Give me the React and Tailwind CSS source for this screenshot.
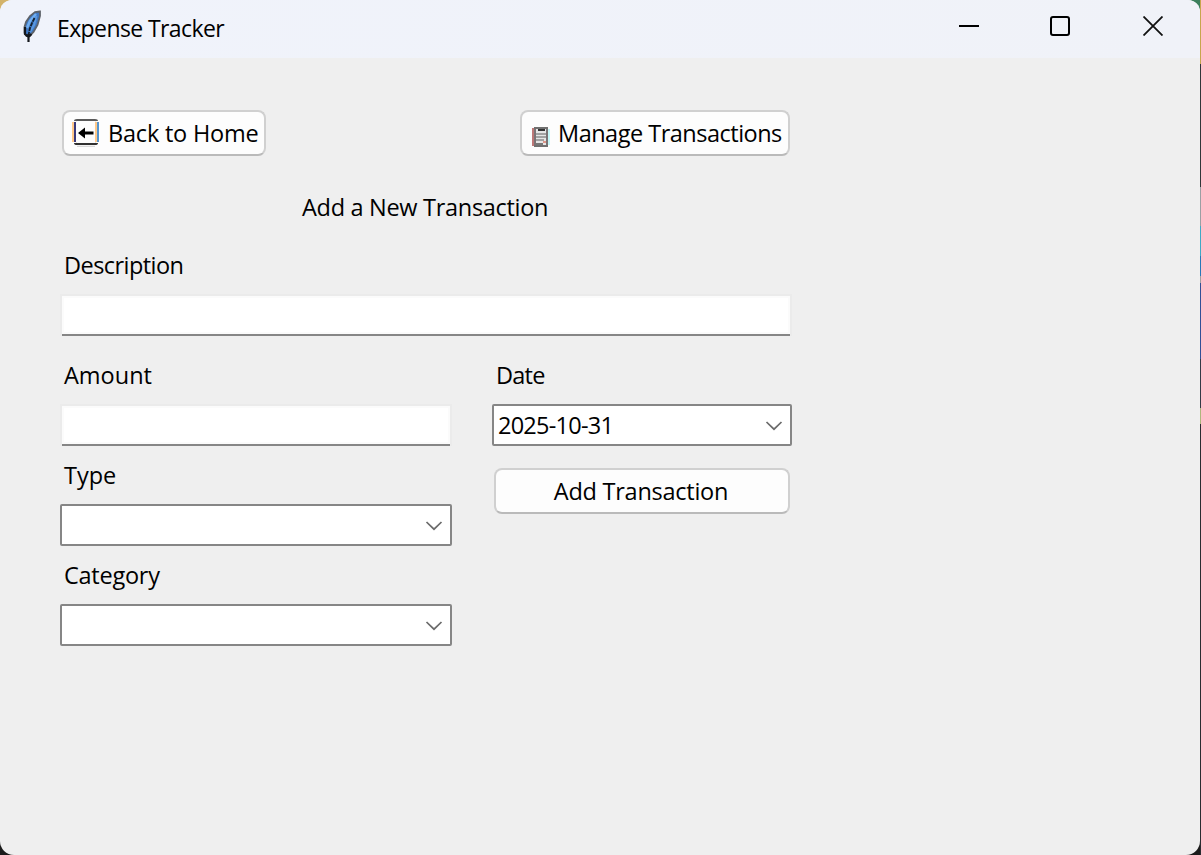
const TEXT = "block whitespace-nowrap leading-8 text-black";

function Label({ children, className = "" }) {
  return <span className={`${TEXT} text-[23.5px] ${className}`}>{children}</span>;
}

function Button({ children, className = "" }) {
  return (
    <button
      className={`flex h-[46px] items-center rounded-[8px] border-2 border-[#d0d0d0] border-b-[#bababa] bg-[#fdfdfd] ${className}`}
    >
      {children}
    </button>
  );
}

function Entry({ className = "" }) {
  return (
    <div className={`flex h-[42px] flex-col bg-[#ebebeb] px-[2px] pt-[2px] ${className}`}>
      <input className="h-[38px] w-full border-2 border-[#fbfbfb] bg-white outline-none" />
      <div className="h-[2px] bg-[#868686]" />
    </div>
  );
}

function Combo({ value, className = "" }) {
  return (
    <div
      className={`flex h-[42px] items-center justify-between rounded-[2px] border-2 border-[#868686] bg-white pr-[7px] pl-[4px] ${className}`}
    >
      <Label className="tracking-[-0.75px]">{value}</Label>
      <svg width="18" height="12" viewBox="0 0 18 12" fill="none" stroke="#6b6b6b" strokeWidth="1.7">
        <path d="M1.5 3 9 10.2 16.5 3" />
      </svg>
    </div>
  );
}

function Feather() {
  return (
    <svg width="20" height="34" viewBox="0 0 20 34">
      <path d="M18 1.5 13 2 8 6 4 12 2.5 17V23l2 3h3l4-4 4-7 2.500-9Z" fill="#3f78c4" stroke="#5d6269" strokeWidth="1.800" />
      <path d="M14 4 8 11 5 18" stroke="#70aef0" strokeWidth="2.500" fill="none" />
      <path d="M14.500 6 12 15 8 22" stroke="#5a98e0" strokeWidth="2" fill="none" />
      <path d="M12.500 8 10 13 8 18 6.500 25" stroke="#15202e" strokeWidth="1.800" strokeDasharray="4 1" fill="none" />
      <path d="M3 17v7l3.500 3 3-3M6.500 24v8" stroke="#15181d" strokeWidth="2.200" fill="none" />
    </svg>
  );
}

function BackIcon() {
  return (
    <svg width="28" height="28" viewBox="0 0 28 28" fill="none">
      <path d="M5 27.500h18" stroke="#d8d8d8" strokeWidth="1.5" />
      <path d="M1 3v20M24 3v20" stroke="#ffc98a" strokeWidth="2" />
      <path d="M26 3v20" stroke="#5595cf" strokeWidth="2" />
      <path d="M3 3v20" stroke="#39397a" strokeWidth="2" />
      <path d="M3 2q0-1 2-1h18q2 0 2 1" stroke="#595959" strokeWidth="2" />
      <path d="M3 24q0 1 2 1h18q2 0 2-1" stroke="#303030" strokeWidth="2" />
      <path d="M6 14 13 8.500v4h8.500v3H13v4Z" fill="#000" />
    </svg>
  );
}

function ClipboardIcon() {
  return (
    <svg width="18" height="20" viewBox="0 0 18 20" fill="none">
      <path d="M17 2v16" stroke="#c5f6f7" strokeWidth="2" />
      <path d="M1 1v18" stroke="#bd7777" strokeWidth="2" />
      <path d="M3 1v17M15 1v18" stroke="#7a7476" strokeWidth="2" />
      <path d="M2 1h14M2 19h14" stroke="#707070" strokeWidth="2" />
      <path d="M4 2h10v16H4Z" fill="#e5e5e5" />
      <path d="M6 3h7" stroke="#333" strokeWidth="2" />
      <path d="M4 7h10M4 10h10M4 13h8" stroke="#a2a2a2" strokeWidth="2" />
      <path d="M11 15h3" stroke="#dc9588" strokeWidth="2" />
      <path d="M4 17h7" stroke="#777" strokeWidth="2" />
    </svg>
  );
}

function TitleBar() {
  return (
    <header className="flex h-[58px] shrink-0 bg-linear-to-r from-[#f0f3fb] to-[#f0f2f8]">
      <div className="pt-[10px] pl-[22px]">
        <Feather />
      </div>
      <div className="pt-3 pl-[15px]">
        <span className={`${TEXT} text-[23px] tracking-[-0.6px]`}>Expense Tracker</span>
      </div>
      <div className="mr-[37px] ml-auto flex items-start pt-[16px]">
        <svg width="20" height="20" viewBox="0 0 20 20" stroke="#000" strokeWidth="2">
          <path d="M0 10h20" />
        </svg>
        <svg className="ml-[71px]" width="20" height="20" viewBox="0 0 20 20" fill="none" stroke="#000" strokeWidth="2">
          <rect x="1" y="1" width="18" height="18" rx="2" />
        </svg>
        <svg className="ml-[73px]" width="20" height="20" viewBox="0 0 20 20" stroke="#111" strokeWidth="1.8">
          <path d="M.5.5 19.5 19.5M19.5.5.5 19.5" />
        </svg>
      </div>
    </header>
  );
}

export default function App() {
  return (
    <div className="flex h-[855px] w-[1201px] flex-col bg-[#1c1c1c] font-['Open_Sans','Noto_Sans',sans-serif]">
      <div className="flex h-full bg-linear-to-r from-[#d3b36a] from-50% to-[#3c805c] to-50% bg-size-[100%_30px] bg-no-repeat">
        <div className="flex w-[1200px] flex-col overflow-hidden rounded-t-[12px] rounded-b-[14px] bg-[#efefef]">
          <TitleBar />
          <main className="ml-[60px] flex w-[732px] flex-col pt-[52px]">
            <div className="flex justify-between px-[2px]">
              <Button className="w-[204px] pl-[8px]">
                <BackIcon />
                <Label className="ml-[8px] tracking-[-0.2px]">Back to Home</Label>
              </Button>
              <Button className="w-[270px] pl-[10px]">
                <div className="pt-[8px]">
                  <ClipboardIcon />
                </div>
                <Label className="ml-[8px] tracking-[-0.5px]">Manage Transactions</Label>
              </Button>
            </div>
            <Label className="mt-[35px] ml-[242px] tracking-[-0.3px]">Add a New Transaction</Label>
            <Label className="mt-[26px] ml-[4px] tracking-[-0.55px]">Description</Label>
            <Entry className="mt-[13px]" />
            <div className="mt-[23px] flex gap-[40px]">
              <div className="flex w-[392px] flex-col">
                <Label className="ml-[4px]">Amount</Label>
                <Entry className="mt-[13px]" />
                <Label className="mt-[13px] ml-[4px]">Type</Label>
                <Combo className="mt-[13px]" />
                <Label className="mt-[13px] ml-[4px] tracking-[-0.25px]">Category</Label>
                <Combo className="mt-[13px]" />
              </div>
              <div className="flex w-[300px] flex-col">
                <Label className="ml-[4px] tracking-[-0.75px]">Date</Label>
                <Combo className="mt-[13px]" value="2025-10-31" />
                <Button className="mx-[2px] mt-[22px] justify-center pr-[2px]">
                  <Label className="tracking-[-0.25px]">Add Transaction</Label>
                </Button>
              </div>
            </div>
          </main>
        </div>
        <div className="flex w-px flex-col">
          <div className="h-[64px] bg-[#c7a54d]" />
          <div className="h-[123px] bg-[#303638]" />
          <div className="h-[39px] bg-[#9b9fa3]" />
          <div className="h-[30px] bg-[#40a9c5]" />
          <div className="h-[20px] bg-[#2878b8]" />
          <div className="h-[7px] bg-[#a0a0a0]" />
          <div className="h-[76px] bg-[#334f96]" />
          <div className="h-[49px] bg-[#343a46]" />
          <div className="h-[16px] bg-[#aeb67c]" />
          <div className="grow bg-[#2a2c31]" />
        </div>
      </div>
    </div>
  );
}
